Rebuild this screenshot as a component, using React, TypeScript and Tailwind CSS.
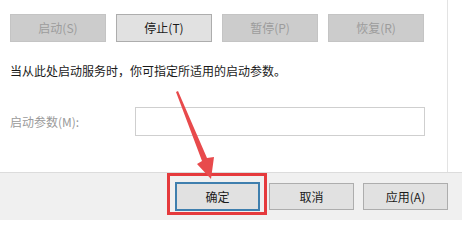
const font = { fontFamily: '"Noto Sans CJK SC", "Liberation Sans", sans-serif' }

const TopButton = ({ label, disabled }: { label: string; disabled?: boolean }) => (
    <div
        className={`flex h-[28px] w-[96px] items-center justify-center border text-[12px] ${
            disabled
                ? 'border-[#c4c4c4] bg-[#cccccc] text-[#9c9c9c]'
                : 'border-[#adadad] bg-[#e1e1e1] text-[#1a1a1a]'
        }`}
    >
        {label}
    </div>
)

const App = () => {
    return (
        <div className="relative h-[220px] w-[462px] overflow-hidden bg-white" style={font}>
            <div className="h-[172px] w-[448px] border-r border-[#e3e3e3] bg-white">
                <div className="flex gap-[10px] pl-[10px] pt-[14px]">
                    <TopButton label="启动(S)" disabled />
                    <TopButton label="停止(T)" />
                    <TopButton label="暂停(P)" disabled />
                    <TopButton label="恢复(R)" disabled />
                </div>
                <div className="mt-[20px] pl-[10px] text-[12px] leading-[17px] text-[#1a1a1a]">
                    当从此处启动服务时，你可指定所适用的启动参数。
                </div>
                <div className="mt-[28px] flex items-center pl-[10px]">
                    <div className="w-[125px] text-[12px] text-[#9a9a9a]">启动参数(M):</div>
                    <div className="h-[29px] w-[290px] border border-[#cfcfcf] bg-white"></div>
                </div>
            </div>
            <div className="flex h-[48px] items-center justify-end gap-[9px] border-t border-[#dcdcdc] bg-[#f0f0f0] pr-[14px]">
                <div className="flex h-[29px] w-[85px] items-center justify-center border-2 border-[#3f7fae] bg-[#e1e1e1] text-[12px] text-[#1a1a1a]">
                    确定
                </div>
                <div className="flex h-[27px] w-[85px] items-center justify-center border border-[#adadad] bg-[#e1e1e1] text-[12px] text-[#1a1a1a]">
                    取消
                </div>
                <div className="flex h-[27px] w-[85px] items-center justify-center border border-[#adadad] bg-[#e1e1e1] text-[12px] text-[#1a1a1a]">
                    应用(A)
                </div>
            </div>

            {/* red highlight box */}
            <div className="pointer-events-none absolute left-[167px] top-[173px] h-[42px] w-[100px] border-[3px] border-[#e53a3d]"></div>

            {/* red arrow */}
            <svg className="pointer-events-none absolute left-0 top-0" width="462" height="220" viewBox="0 0 462 220">
                <polygon
                    points="176,92 178,91 207,158 214,157 211,179 197,164 202,161"
                    fill="#e84a4c"
                />
            </svg>
        </div>
    )
}
export default App
